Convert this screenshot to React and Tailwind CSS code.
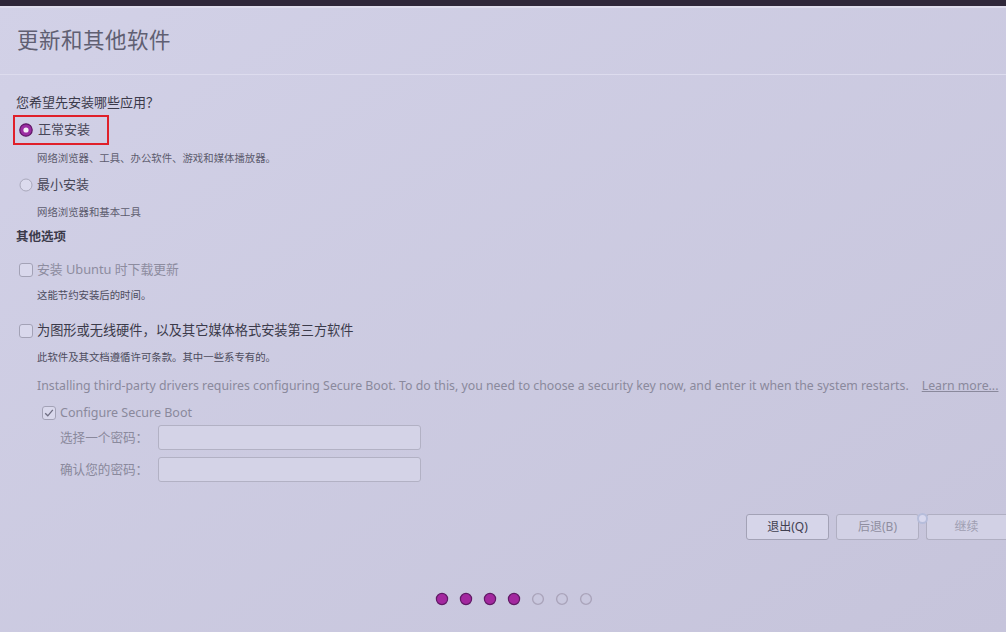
import React from "react";

const font = { fontFamily: '"Noto Sans", "Noto Sans CJK SC", sans-serif' };

function Radio({ checked }) {
  return (
    <svg width="14" height="14" viewBox="0 0 14 14" className="shrink-0">
      {checked ? (
        <>
          <circle cx="7" cy="7" r="6.2" fill="#9c2da3" stroke="#5e1766" strokeWidth="1.2" />
          <circle cx="7" cy="7" r="2.6" fill="#f3eef6" />
        </>
      ) : (
        <circle cx="7" cy="7" r="6" fill="#dcdbee" stroke="#a9a8bb" strokeWidth="1" />
      )}
    </svg>
  );
}

function Check({ checked }) {
  return (
    <svg width="14" height="14" viewBox="0 0 14 14" className="shrink-0">
      <rect x="0.5" y="0.5" width="13" height="13" rx="2.5" fill="#d9d8ec" stroke="#a3a2b6" />
      {checked && (
        <path d="M3.2 7.2 L5.8 9.8 L10.8 3.8" fill="none" stroke="#6f6e82" strokeWidth="1.3" />
      )}
    </svg>
  );
}

function Dot({ on }) {
  return (
    <svg width="14" height="14" viewBox="0 0 14 14">
      {on ? (
        <circle cx="7" cy="7" r="5.6" fill="#a3289f" stroke="#611a66" strokeWidth="1.2" />
      ) : (
        <circle cx="7" cy="7" r="5.4" fill="none" stroke="#aaa4ba" strokeWidth="1.4" />
      )}
    </svg>
  );
}

export default function App() {
  return (
    <div
      style={font}
      className="w-[1006px] h-[632px] overflow-hidden flex flex-col bg-linear-to-br from-[#d2d1e7] to-[#c6c4db] relative"
    >
      <div className="h-[6px] bg-[#2f2739] shrink-0" />
      <div className="h-[2px] bg-[#dedcec] shrink-0" />
      <div className="h-[66px] shrink-0 flex items-center pl-[17px] pb-[2px]">
        <span className="text-[21.5px] text-[#605f72] tracking-[0.5px]">更新和其他软件</span>
      </div>
      <div className="h-px bg-[#dddcee] shrink-0" />

      <div className="flex flex-col pl-[16px]">
        <div className="mt-[17px] h-[22px] flex items-center text-[13px] text-[#3b3a4a]">
          您希望先安装哪些应用？
        </div>
        <div className="mt-px ml-[-3px] h-[30px] w-[96px] border-2 border-[#e0202a] flex items-center pl-[4px] gap-[5px]">
          <Radio checked />
          <span className="text-[13px] text-[#474657]">正常安装</span>
        </div>
        <div className="mt-[3px] h-[22px] flex items-center pl-[21px] text-[10.4px] text-[#5d5c6e]">
          网络浏览器、工具、办公软件、游戏和媒体播放器。
        </div>
        <div className="mt-[4px] h-[22px] flex items-center pl-[3px] gap-[4px]">
          <Radio />
          <span className="text-[13px] text-[#474657]">最小安装</span>
        </div>
        <div className="mt-[6px] h-[22px] flex items-center pl-[21px] text-[10.4px] text-[#5d5c6e]">
          网络浏览器和基本工具
        </div>
        <div className="mt-[2px] h-[22px] flex items-center text-[12.5px] font-bold text-[#3b3a4a]">
          其他选项
        </div>
        <div className="mt-[11px] h-[22px] flex items-center pl-[3px] gap-[4px]">
          <Check />
          <span className="text-[12.8px] text-[#8d8c9f]">安装 Ubuntu 时下载更新</span>
        </div>
        <div className="mt-[4px] h-[22px] flex items-center pl-[21px] text-[10.4px] text-[#4d4c5e]">
          这能节约安装后的时间。
        </div>
        <div className="mt-[13px] h-[22px] flex items-center pl-[3px] gap-[4px]">
          <Check />
          <span className="text-[13.2px] text-[#3b3a4a]">为图形或无线硬件，以及其它媒体格式安装第三方软件</span>
        </div>
        <div className="mt-[5px] h-[22px] flex items-center pl-[21px] text-[10.4px] text-[#4d4c5e]">
          此软件及其文档遵循许可条款。其中一些系专有的。
        </div>
        <div className="mt-[6px] h-[22px] flex items-center pl-[21px] text-[12.3px] text-[#8a899c] whitespace-nowrap">
          <span>
            Installing third-party drivers requires configuring Secure Boot. To do this, you need to choose a security key now, and enter it when the system restarts.
          </span>
          <span className="ml-[13px] underline">Learn more...</span>
        </div>
        <div className="mt-[5px] h-[22px] flex items-center pl-[26px] gap-[4px]">
          <Check checked />
          <span className="text-[12.5px] text-[#8a899c]">Configure Secure Boot</span>
        </div>
        <div className="mt-px h-[25px] flex items-center pl-[44px]">
          <span className="w-[98px] text-[12.6px] text-[#8a899c] pt-[1px]">选择一个密码：</span>
          <div className="w-[263px] h-[25px] border border-[#b2b1c4] rounded-[3px] bg-[#d4d3e7]" />
        </div>
        <div className="mt-[7px] h-[25px] flex items-center pl-[44px]">
          <span className="w-[98px] text-[12.6px] text-[#8a899c] pt-[1px]">确认您的密码：</span>
          <div className="w-[263px] h-[25px] border border-[#b2b1c4] rounded-[3px] bg-[#d4d3e7]" />
        </div>
      </div>

      <div className="mt-[32px] h-[26px] flex justify-end gap-[7px] relative">
        <div className="w-[83px] h-[26px] border border-[#a3a2b6] rounded-[3px] bg-[#d6d5e9] flex items-center justify-center text-[12px] text-[#414050]">
          退出(Q)
        </div>
        <div className="w-[83px] h-[26px] border border-[#b0afc2] rounded-[3px] bg-[#d2d1e5] flex items-center justify-center text-[12px] text-[#8f8ea0]">
          后退(B)
        </div>
        <div className="w-[80px] h-[26px] border border-[#b0afc2] rounded-l-[3px] border-r-0 bg-[#d2d1e5] flex items-center justify-center text-[12px] text-[#a09fb2]">
          继续
        </div>
        <div className="absolute left-[917px] top-[-1px] w-[11px] h-[11px] rounded-full border-2 border-[#b6bddb] bg-[#d8d8ee]" />
      </div>

      <div className="mt-[52px] flex justify-center gap-[10px] pl-[22px]">
        <Dot on />
        <Dot on />
        <Dot on />
        <Dot on />
        <Dot />
        <Dot />
        <Dot />
      </div>
    </div>
  );
}
